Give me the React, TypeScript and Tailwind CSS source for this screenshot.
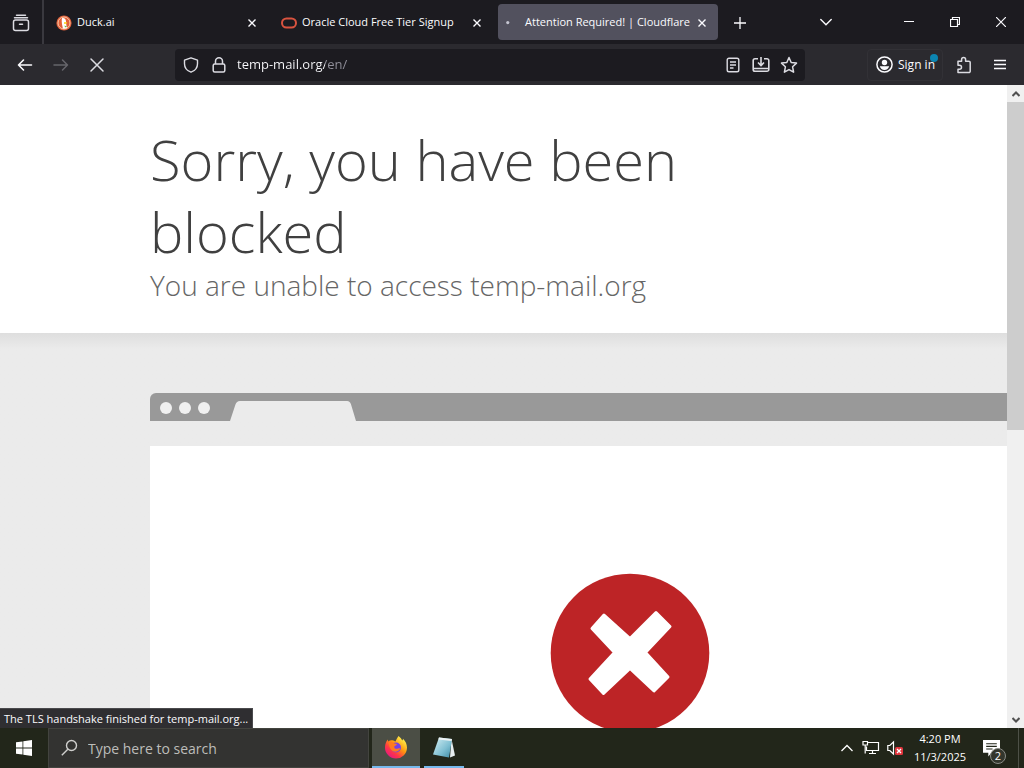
import type { ReactNode } from 'react'

interface TabProps {
  title: string
  icon: ReactNode
  active?: boolean
}

function CloseIcon({ className }: { className: string }) {
  return (
    <svg className={className} viewBox="0 0 16 16" fill="none" stroke="currentColor" strokeWidth="1.5" strokeLinecap="round">
      <path d="M2 2l12 12M14 2L2 14" />
    </svg>
  )
}

function DuckIcon() {
  return (
    <svg className="h-4 w-4" viewBox="0 0 16 16">
      <circle cx="8" cy="8" r="7.6" fill="#e0603a" />
      <circle cx="8" cy="8" r="6" fill="none" stroke="#f7c9a8" strokeWidth="1" />
      <path d="M6 3.2c2.4-.5 4 .8 4 3.2 0 1.7.5 4.5 1 6.6-1.5.8-3.2.8-4 .5C6.5 11.5 5.2 6.5 6 3.2z" fill="#fff" />
      <path d="M8 7.2h3.2l-.8 1.5H8z" fill="#fdd20a" />
      <path d="M8.5 10.5l2.5 1-2 1z" fill="#65bc46" />
    </svg>
  )
}

function OracleIcon() {
  return (
    <svg className="h-4 w-4" viewBox="0 0 16 16" fill="none" stroke="#d9533f" strokeWidth="2">
      <rect x="1" y="3.5" width="14" height="9" rx="4.5" />
    </svg>
  )
}

function SpinnerDot() {
  return (
    <svg className="h-4 w-4" viewBox="0 0 16 16" fill="#c4c4d0">
      <circle cx="2" cy="7.5" r="1.8" />
    </svg>
  )
}

function Tab({ title, icon, active }: TabProps) {
  return (
    <div
      className={`flex h-9 w-[220px] items-center rounded-[4px] pl-2 pr-1 pt-px ${
        active ? 'bg-[#52515e]' : ''
      }`}
    >
      {icon}
      <span className="ml-[5px] flex-1 whitespace-nowrap text-[11px] font-medium text-[#fbfbfe]">{title}</span>
      <button aria-label={`Close ${title}`} className="flex h-6 w-6 shrink-0 items-center justify-center text-[#fbfbfe]">
        <svg className="h-2 w-2" viewBox="0 0 8 8" fill="none" stroke="currentColor" strokeWidth="1.4">
          <path d="M.5 .5l7 7M7.5 .5l-7 7" />
        </svg>
      </button>
    </div>
  )
}

function TabStrip() {
  return (
    <div className="flex h-11 shrink-0 items-center bg-[#1c1b20] text-[#fbfbfe]">
      <button aria-label="Firefox View" className="flex h-11 w-11 shrink-0 items-center justify-center border-r-2 border-[#3a393f] pt-px">
        <svg className="h-[18px] w-[18px]" viewBox="0 0 18 18" fill="none" stroke="#dcdce2" strokeWidth="1.5" strokeLinecap="round">
          <path d="M4.5 1.2h9M2.5 3.8h13" />
          <rect x="1.5" y="6" width="15" height="10.5" rx="2" />
          <path d="M7.5 10.2h3" />
        </svg>
      </button>
      <div className="ml-1 flex gap-[5px]">
        <Tab title="Duck.ai" icon={<DuckIcon />} />
        <Tab title="Oracle Cloud Free Tier Signup" icon={<OracleIcon />} />
        <Tab title="Attention Required! | Cloudflare" icon={<SpinnerDot />} active />
      </div>
      <button aria-label="New tab" className="ml-1 flex h-9 w-9 items-center justify-center pt-px">
        <svg className="h-3 w-3" viewBox="0 0 12 12" stroke="currentColor" strokeWidth="1.3">
          <path d="M6 0v12M0 6h12" />
        </svg>
      </button>
      <div className="ml-auto flex items-center">
        <button aria-label="List all tabs" className="mr-[42px] flex h-9 w-9 items-center justify-center">
          <svg className="h-3 w-3" viewBox="0 0 12 12" fill="none" stroke="currentColor" strokeWidth="1.4" strokeLinecap="round">
            <path d="M.8 3.5L6 8.700l5.200-5.200" />
          </svg>
        </button>
        <button aria-label="Minimize" className="flex h-11 w-[46px] items-center justify-center">
          <svg className="h-[10px] w-[10px]" viewBox="0 0 10 10" stroke="currentColor">
            <path d="M0 4.500h10" />
          </svg>
        </button>
        <button aria-label="Restore" className="flex h-11 w-[46px] items-center justify-center">
          <svg className="h-[10px] w-[10px]" viewBox="0 0 10 10" fill="none" stroke="currentColor" strokeWidth="1.2">
            <path d="M.5 2.500h7v7h-7zM2.500 2.500v-2h7v7h-2" />
          </svg>
        </button>
        <button aria-label="Close window" className="flex h-11 w-[46px] items-center justify-center">
          <svg className="h-[10px] w-[10px]" viewBox="0 0 10 10" stroke="currentColor" strokeWidth="1.2">
            <path d="M0 0l10 10M10 0L0 10" />
          </svg>
        </button>
      </div>
    </div>
  )
}

function Toolbar() {
  return (
    <div className="flex h-[41px] shrink-0 items-center bg-[#2b2a2f] pl-[7px] pr-[6px] text-[#fbfbfe]">
      <button aria-label="Back" className="flex h-8 w-9 items-center justify-center">
        <svg className="h-4 w-4" viewBox="0 0 16 16" fill="none" stroke="currentColor" strokeWidth="1.6" strokeLinecap="round" strokeLinejoin="round">
          <path d="M14.500 8H1.500M6.500 3l-5 5 5 5" />
        </svg>
      </button>
      <button aria-label="Forward" disabled className="flex h-8 w-9 items-center justify-center text-[#66656b]">
        <svg className="h-4 w-4" viewBox="0 0 16 16" fill="none" stroke="currentColor" strokeWidth="1.5" strokeLinecap="round" strokeLinejoin="round">
          <path d="M1 8h13.500M9.500 3l5 5-5 5" />
        </svg>
      </button>
      <button aria-label="Stop" className="flex h-8 w-9 items-center justify-center text-[#dcdce2]">
        <CloseIcon className="h-4 w-4" />
      </button>
      <div className="ml-[60px] mr-[62px] flex h-8 min-w-0 flex-1 items-center rounded-[4px] bg-[#1c1b20] px-[2px]">
        <button aria-label="Tracking protection" className="flex h-7 w-7 items-center justify-center">
          <svg className="h-4 w-4" viewBox="0 0 16 16" fill="none" stroke="#dcdce2" strokeWidth="1.4" strokeLinejoin="round">
            <path d="M8 .8l6.500 2.400v3.600c0 3.800-2.500 7-6.500 8.400-4-1.400-6.500-4.600-6.500-8.400V3.200z" />
          </svg>
        </button>
        <button aria-label="Site information" className="flex h-7 w-7 items-center justify-center">
          <svg className="h-4 w-4" viewBox="0 0 16 16" fill="none" stroke="#dcdce2" strokeWidth="1.5">
            <rect x="2.200" y="7" width="11.600" height="8" rx="1.500" />
            <path d="M4.500 7V4.300a3.500 3.500 0 017 0V7" />
          </svg>
        </button>
        <input
          aria-label="Address"
          defaultValue="temp-mail.org/en/"
          className="ml-1 min-w-0 flex-1 bg-[linear-gradient(90deg,#fbfbfe_88px,#92919b_88px)] bg-clip-text pt-px text-[13px] text-transparent outline-none"
        />
        <button aria-label="Reader view" className="flex h-7 w-7 items-center justify-center">
          <svg className="h-4 w-4" viewBox="0 0 16 16" fill="none" stroke="#dcdce2" strokeWidth="1.4">
            <rect x="2.200" y="1.200" width="11.600" height="13.600" rx="1.800" />
            <path d="M5 5h6M5 8h6M5 11h3.500" strokeWidth="1.300" />
          </svg>
        </button>
        <button aria-label="Save page" className="flex h-7 w-7 items-center justify-center">
          <svg className="h-4 w-[18px]" viewBox="0 0 18 16" fill="none" stroke="#dcdce2" strokeWidth="1.6">
            <path d="M6 1.700H3A1.800 1.800 0 001.200 3.500v9A1.800 1.800 0 003 14.300h12a1.800 1.800 0 001.800-1.800v-9A1.800 1.800 0 0015 1.700h-3M1.200 11.500h15.600M9 0v8M6 5.500l3 3 3-3" />
          </svg>
        </button>
        <button aria-label="Bookmark this page" className="flex h-7 w-7 items-center justify-center">
          <svg className="h-[18px] w-[18px]" viewBox="0 0 18 18" fill="none" stroke="#dcdce2" strokeWidth="1.5" strokeLinejoin="round">
            <path d="M9 1.500l2.200 5 5.300.6-3.900 3.700 1 5.400L9 13.600l-4.600 2.600 1-5.400L1.500 7.100l5.300-.6z" />
          </svg>
        </button>
      </div>
      <button className="relative flex h-8 w-[76px] items-center rounded-[4px] border border-[#323136] pl-2 text-[12px]">
        <svg className="mr-[5px] h-[17px] w-[17px]" viewBox="0 0 17 17" fill="none">
          <circle cx="8.500" cy="8.500" r="7.600" stroke="currentColor" strokeWidth="1.5" />
          <circle cx="8.500" cy="6.500" r="2.700" fill="currentColor" />
          <path d="M3.800 10.200h9.400c-.6 2.400-2.400 3.800-4.700 3.800s-4.100-1.400-4.700-3.800z" fill="currentColor" />
        </svg>
        Sign in
        <span className="absolute right-[4px] top-[4px] h-2 w-2 rounded-full bg-[#0b84b0]" />
      </button>
      <button aria-label="Extensions" className="ml-[3px] flex h-8 w-9 items-center justify-center">
        <svg className="h-[18px] w-[16px]" viewBox="0 0 16 18" fill="none" stroke="#dcdce2" strokeWidth="1.5" strokeLinejoin="round">
          <path d="M2 5.200h3.600V3.500a2 2 0 014 0v1.700h3.200a1.400 1.400 0 011.400 1.400v8.600a1.400 1.400 0 01-1.400 1.400H2v-3.400h1.500a2 2 0 000-4H2z" />
        </svg>
      </button>
      <button aria-label="Open application menu" className="flex h-8 w-9 items-center justify-center">
        <svg className="h-3 w-3" viewBox="0 0 12 12" stroke="currentColor" strokeWidth="1.3">
          <path d="M0 1.500h12M0 5.500h12M0 9.500h12" />
        </svg>
      </button>
    </div>
  )
}

function BlockedPage() {
  return (
    <main className="min-w-0 flex-1 overflow-hidden bg-[#ebebeb] font-['Open_Sans',sans-serif] font-light">
      <header className="bg-white px-[150px] pb-[30px] pt-[38px]">
        <h1 className="text-[56px] leading-[72px] text-[#404040]">Sorry, you have been blocked</h1>
        <h2 className="text-[28px] leading-9 text-[#666666]">You are unable to access temp-mail.org</h2>
      </header>
      <section className="bg-gradient-to-b from-[#dedede] to-[#ebebeb] to-[16px] pl-[150px] pt-[60px]">
        <div className="flex h-7 w-[960px] items-end rounded-t-[6px] bg-[#999999] pl-[10px]">
          <div className="flex gap-[7px] self-center pt-[2px]">
            <span className="h-3 w-3 rounded-full bg-[#f0f0f0]" />
            <span className="h-3 w-3 rounded-full bg-[#f0f0f0]" />
            <span className="h-3 w-3 rounded-full bg-[#f0f0f0]" />
          </div>
          <svg className="ml-5 h-5 w-[126px]" viewBox="0 0 127 20" preserveAspectRatio="none" fill="#ebebeb">
            <path d="M0 20L5.500 3.500Q6.700 0 10 0h108q3 0 4 3.500L127 20z" />
          </svg>
        </div>
        <div className="mt-[25px] flex h-[400px] w-[960px] justify-center bg-white pt-[127px]">
          <svg className="h-[160px] w-[160px]" viewBox="0 0 160 160">
            <circle cx="80" cy="80" r="79.300" fill="#bd2426" />
            <path
              d="M54 42L80 65.500L106 39.500L120 53.500L95.500 79.500L118 104L104 118L80 95.500L53.500 120.500L40 106L64.500 79.500L42 55.500z"
              fill="#fff"
              stroke="#fff"
              strokeWidth="3"
              strokeLinejoin="round"
            />
          </svg>
        </div>
      </section>
    </main>
  )
}

function Scrollbar() {
  return (
    <div className="flex w-[17px] shrink-0 flex-col bg-[#f0f0f0] text-[#505050]">
      <button aria-label="Scroll up" className="flex h-[17px] items-center justify-center">
        <svg className="h-2 w-2" viewBox="0 0 8 8" fill="none" stroke="currentColor" strokeWidth="2">
          <path d="M.5 6L4 2.500 7.500 6" />
        </svg>
      </button>
      <div className="h-[51%] bg-[#cdcdcd]" />
      <button aria-label="Scroll down" className="mt-auto flex h-[17px] items-center justify-center">
        <svg className="h-2 w-2" viewBox="0 0 8 8" fill="none" stroke="currentColor" strokeWidth="2">
          <path d="M.5 2L4 5.500 7.500 2" />
        </svg>
      </button>
    </div>
  )
}

function FirefoxIcon() {
  return (
    <svg className="h-6 w-6" viewBox="0 0 24 24">
      <defs>
        <linearGradient id="fox" x1="0.850" y1="0.100" x2="0.150" y2="0.950">
          <stop offset="0" stopColor="#fff44f" />
          <stop offset="0.400" stopColor="#ff980e" />
          <stop offset="0.700" stopColor="#ff3647" />
          <stop offset="1" stopColor="#e31587" />
        </linearGradient>
      </defs>
      <path
        d="M14.500 1c2 1.500 3.200 3 3.700 4.500.6-.4.800-1 .8-1.700 2.500 2.300 4 5.500 4 9A11 11 0 0112 23.500 11 11 0 011 12.500C1 9 2.200 6.500 3.800 4.500c0 .8.200 1.400.6 1.900C5.500 5.300 6.700 5 8 5.200 9.500 5 10.500 6 11.500 6.500c1-2 1.500-3.500 3-5.500z"
        fill="url(#fox)"
      />
      <circle cx="12" cy="12.500" r="5" fill="#7542e5" />
      <path d="M4.500 7.500c2.500-1 4.500-.5 5.800 1 1 .2 2.200.2 2.700.8-.3 1.200-2.200 1.300-2.700 2.200-.3 1.500 1 2.500 2.700 2.300 1.200-.2 2-.8 3.200-.3-.7 2-2.700 3.200-4.900 3.200C8 16.700 5.500 14 4.500 7.500z" fill="#ff7a1f" />
    </svg>
  )
}

function NotepadIcon() {
  return (
    <svg className="h-6 w-6" viewBox="0 0 24 24">
      <defs>
        <linearGradient id="pad" x1="0" y1="0" x2="1" y2="1">
          <stop offset="0" stopColor="#d8f1f6" />
          <stop offset="0.600" stopColor="#7fbfd2" />
          <stop offset="1" stopColor="#3d8ba5" />
        </linearGradient>
      </defs>
      <path d="M19.500 4L23 20.500l-5 2z" fill="#e7eef0" />
      <path d="M7 2.500L20 4l-3 18.500L1 19.500z" fill="url(#pad)" />
      <path d="M7 2.500L20 4l-.4 2L6.300 4.500z" fill="#eef3f4" />
    </svg>
  )
}

function Taskbar() {
  return (
    <footer className="flex h-10 shrink-0 items-center bg-[#22261a] font-['Open_Sans',sans-serif] text-white">
      <button aria-label="Start" className="flex h-10 w-12 shrink-0 items-center justify-center">
        <svg className="h-4 w-4" viewBox="0 0 16 16" fill="#fff">
          <path d="M0 2.300l6.500-.9v6.200H0zM7.300 1.300L16 0v7.600H7.300zM0 8.400h6.500v6.200L0 13.700zM7.300 8.400H16V16l-8.700-1.300z" />
        </svg>
      </button>
      <label className="flex h-10 w-[321px] items-center border border-[#43443f] bg-[#333331] pl-3">
        <svg className="h-[18px] w-[18px]" viewBox="0 0 18 18" fill="none" stroke="#cfcfcd" strokeWidth="1.4">
          <circle cx="10.500" cy="6.500" r="5" />
          <path d="M6.800 10.200L.8 16.200" />
        </svg>
        <input
          aria-label="Search"
          placeholder="Type here to search"
          className="ml-[9px] min-w-0 flex-1 bg-transparent text-[14px] outline-none placeholder:text-[#bdbdba]"
        />
      </label>
      <button aria-label="Firefox" className="ml-[3px] flex h-10 w-12 items-center justify-center border-b-2 border-[#76b9ed] bg-[#4b4e45]">
        <FirefoxIcon />
      </button>
      <button aria-label="Notepad" className="ml-1 flex h-10 w-10 items-center justify-center border-b-2 border-[#76b9ed]">
        <NotepadIcon />
      </button>
      <div className="ml-auto flex items-center">
        <button aria-label="Show hidden icons" className="flex h-10 w-6 items-center justify-center">
          <svg className="h-3 w-3" viewBox="0 0 12 12" fill="none" stroke="currentColor" strokeWidth="1.3">
            <path d="M.5 9L6 3.500 11.500 9" />
          </svg>
        </button>
        <button aria-label="Network" className="flex h-10 w-6 items-center justify-center">
          <svg className="h-4 w-[18px]" viewBox="0 0 18 16" fill="none" stroke="currentColor" strokeWidth="1.2">
            <path d="M5.500 2.500h11v8H4.500V6.500M10.500 10.500v3M7 13.500h7" />
            <path d="M1 1.500h4.500v3.500H1zM3.200 5v8.500" />
          </svg>
        </button>
        <button aria-label="Volume muted" className="flex h-10 w-6 items-center justify-center">
          <svg className="h-4 w-4" viewBox="0 0 16 16">
            <path d="M.8 5.500h2L6.500 2v12l-3.700-3.500h-2z" fill="none" stroke="currentColor" strokeWidth="1.2" />
            <rect x="8" y="7" width="8" height="8" rx="1.500" fill="#e0343c" />
            <path d="M10 9l4 4M14 9l-4 4" stroke="#fff" strokeWidth="1.3" />
          </svg>
        </button>
        <button className="flex h-10 w-[66px] flex-col items-center justify-center text-[11px] leading-[18px]">
          <span>4:20 PM</span>
          <span>11/3/2025</span>
        </button>
        <button aria-label="Notifications" className="relative flex h-10 w-[46px] items-center border-r border-[#4d5047] pl-[10px]">
          <svg className="h-[17px] w-[17px]" viewBox="0 0 16 16">
            <path d="M0 0h16v12H8l-3 3.500V12H0z" fill="#fff" />
            <path d="M3 3.500h10M3 6h10M3 8.500h6" stroke="#22261a" />
          </svg>
          <span className="absolute bottom-[4px] right-[12px] flex h-4 w-4 items-center justify-center rounded-full border border-[#8a8c86] bg-[#33362d] text-[11px] leading-3">
            2
          </span>
        </button>
        <div className="w-[5px]" />
      </div>
    </footer>
  )
}

export default function App() {
  return (
    <div className="flex h-screen flex-col overflow-hidden font-['Open_Sans',sans-serif]">
      <TabStrip />
      <Toolbar />
      <div className="relative flex min-h-0 flex-1">
        <BlockedPage />
        <Scrollbar />
        <div className="absolute bottom-0 left-0 h-5 border-r border-t border-[#4a4a4d] bg-[#2f2e31] px-1 text-[11px] font-medium leading-5 text-[#fbfbfe]">
          The TLS handshake finished for temp-mail.org...
        </div>
      </div>
      <Taskbar />
    </div>
  )
}
